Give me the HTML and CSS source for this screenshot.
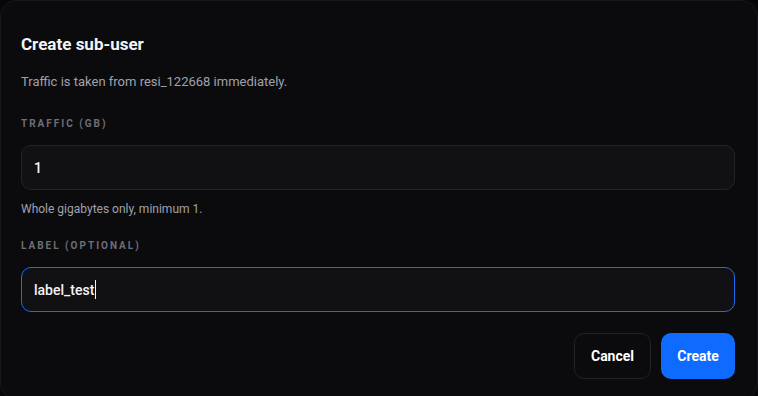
FILE: index.html
```html
<!DOCTYPE html>
<html lang="en">
<head>
<meta charset="UTF-8" />
<meta name="viewport" content="width=device-width, initial-scale=1.0" />
<title>Create sub-user</title>
<link rel="stylesheet" href="styles.css">
</head>
<body>

<div class="modal">
  <h2 class="modal-title">Create sub-user</h2>
  <p class="modal-desc">Traffic is taken from resi_122668 immediately.</p>

  <!-- traffic -->
  <label class="field-label">Traffic (GB)</label>
  <div class="field">1</div>
  <p class="hint">Whole gigabytes only, minimum 1.</p>

  <!-- label -->
  <label class="field-label second">Label (optional)</label>
  <div class="field focus">label_test<span class="caret"></span></div>

  <div class="actions">
    <button class="btn cancel">Cancel</button>
    <button class="btn create">Create</button>
  </div>
</div>

</body>
</html>
```

FILE: styles.css
```css
:root{
  --page:      #060608;
  --modal:     #0b0b0e;
  --modal-bd:  #17171d;
  --field-bg:  #111114;
  --field-bd:  #222227;
  --focus:     #1a6cf2;
  --primary:   #0f6bff;
  --txt:       #f4f4f5;
  --txt-mid:   #a1a1aa;
  --txt-dim:   #6e6e77;
  font-family: Roboto, "Liberation Sans", Arial, sans-serif;
}

*{box-sizing:border-box;margin:0;padding:0}

body{
  background:var(--page);
  width:758px;height:396px;
  overflow:hidden;
}

.modal{
  width:758px;height:400px;
  background:var(--modal);
  border:1px solid var(--modal-bd);
  border-radius:16px;
  padding:32px 22px 0 20px;
  display:flex;
  flex-direction:column;
}

.modal-title{
  font-size:17px;line-height:22px;font-weight:700;
  color:var(--txt);
}

.modal-desc{
  font-size:13px;line-height:18px;
  color:var(--txt-mid);
  margin-top:18px;
}

.field-label{
  display:block;
  font-size:10px;line-height:14px;font-weight:700;
  letter-spacing:.2em;text-transform:uppercase;
  color:var(--txt-dim);
  margin-top:26px;
}
.field-label.second{margin-top:22px}

.field{
  margin-top:14px;
  height:45px;
  background:var(--field-bg);
  border:1px solid var(--field-bd);
  border-radius:10px;
  padding:0 12px;
  display:flex;align-items:center;
  font-size:14px;font-weight:500;
  color:var(--txt);
}
.field.focus{border-color:var(--focus)}

.caret{
  display:inline-block;
  width:1px;height:19px;
  background:var(--txt);
  margin-left:1px;
}

.hint{
  font-size:12px;line-height:16px;
  color:var(--txt-mid);
  margin-top:11px;
}

.actions{
  margin-top:21px;
  display:flex;justify-content:flex-end;gap:10px;
}

.btn{
  height:46px;
  border-radius:10px;
  font-family:inherit;font-size:14px;font-weight:700;
  color:#fff;cursor:pointer;
}
.cancel{
  width:77px;
  background:var(--modal);
  border:1px solid var(--field-bd);
}
.create{
  width:74px;
  background:var(--primary);
  border:none;
}
```
